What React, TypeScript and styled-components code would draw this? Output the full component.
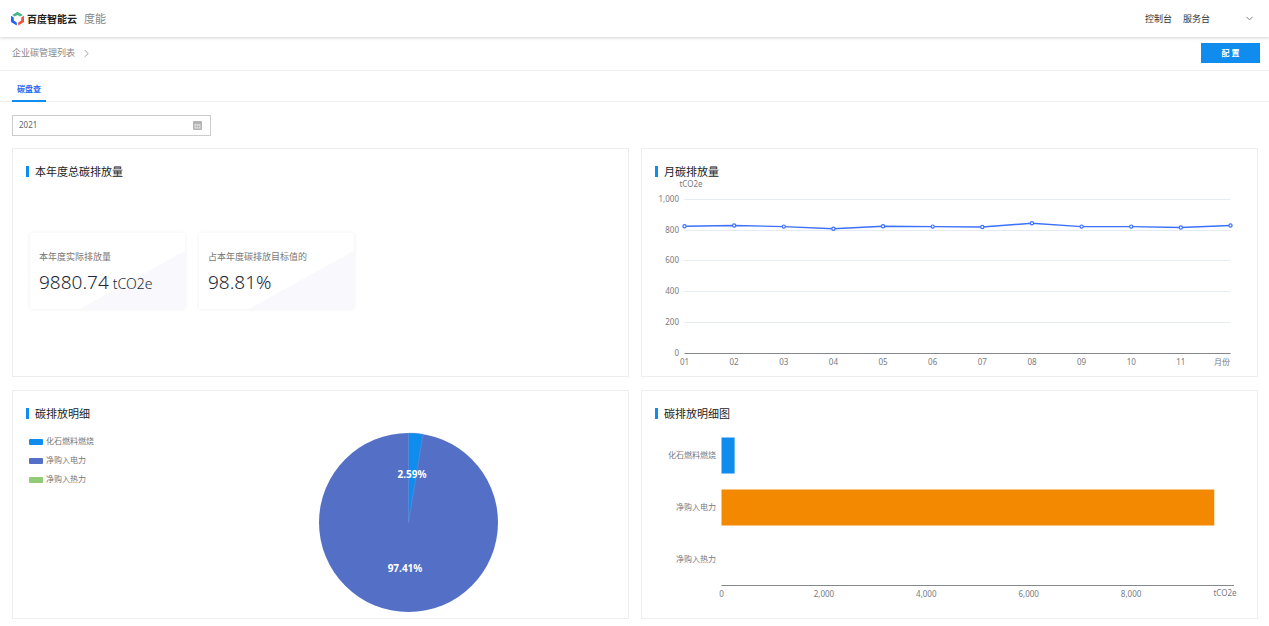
import React from "react";
import styled, { createGlobalStyle } from "styled-components";
import { ChevronDown, ChevronRight } from "lucide-react";

const GlobalStyle = createGlobalStyle`
  * { box-sizing: border-box; }
  body {
    margin: 0;
    background: #fff;
    color: #333;
    font: 8px/12px "Noto Sans", "Noto Sans CJK SC", sans-serif;
  }
  svg text { font: 8px "Noto Sans", "Noto Sans CJK SC", sans-serif; }
`;

const TopBar = styled.header`
  display: flex;
  align-items: center;
  height: 37px;
  padding: 0 14px 0 10px;
  box-shadow: 0 1px 3px rgba(0, 0, 0, 0.18);
`;

const Brand = styled.a`
  display: flex;
  align-items: center;
  gap: 2px;
  color: #222;
  font-size: 10px;
  font-weight: 700;
  text-decoration: none;
`;

const Product = styled.span`
  margin-left: 7px;
  color: #888;
  font-size: 11px;
`;

const TopNav = styled.nav`
  display: flex;
  gap: 11px;
  margin-left: auto;
`;

const TopLink = styled.a`
  color: #333;
  font-size: 9px;
  text-decoration: none;
`;

const AccountButton = styled.button`
  display: flex;
  margin-left: 34px;
  padding: 0;
  border: 0;
  background: none;
  color: #777;
`;

const CrumbBar = styled.div`
  display: flex;
  align-items: center;
  justify-content: space-between;
  height: 34px;
  padding: 0 9px 1px 12px;
  border-bottom: 1px solid #eee;
`;

const Crumb = styled.a`
  display: flex;
  align-items: center;
  gap: 5px;
  color: #888;
  font-size: 9px;
  text-decoration: none;
`;

const PrimaryButton = styled.button`
  width: 59px;
  height: 20px;
  padding: 0;
  border: 0;
  background: #108cee;
  color: #fff;
  font: inherit;
  font-weight: 600;
`;

const TabBar = styled.div`
  display: flex;
  height: 31px;
  padding: 0 12px;
  border-bottom: 1px solid #eee;
`;

const Tab = styled.button`
  height: 31px;
  padding: 6px 5px 0;
  border: 0;
  border-bottom: 2px solid #108cee;
  background: none;
  color: #2468f2;
  font: inherit;
  font-weight: 700;
`;

const Content = styled.main`
  padding: 13px 11px 7px 12px;
`;

const YearPicker = styled.label`
  display: flex;
  align-items: center;
  width: 199px;
  height: 21px;
  margin-bottom: 12px;
  padding: 0 8px 0 6px;
  border: 1px solid #ccc;
`;

const YearInput = styled.input`
  flex: 1;
  min-width: 0;
  padding: 0 0 1px;
  border: 0;
  outline: 0;
  background: none;
  color: #666;
  font: inherit;
`;

const PanelGrid = styled.div`
  display: grid;
  grid-template-columns: repeat(2, minmax(0, 1fr));
  gap: 13px 12px;
`;

const PanelBox = styled.section`
  display: flex;
  flex-direction: column;
  min-height: 229px;
  padding-top: 17px;
  border: 1px solid #eee;
`;

const PanelTitle = styled.h2`
  margin: 0 0 0 13px;
  padding-left: 6px;
  border-left: 3px solid #108cee;
  color: #222;
  font-size: 11px;
  font-weight: 400;
  line-height: 11px;
`;

const StatRow = styled.div`
  display: flex;
  flex: 1;
  align-items: center;
  gap: 14px;
  padding: 0 17px 12px;
`;

const StatCard = styled.div`
  width: 155px;
  height: 76px;
  padding: 18px 9px 0;
  border-radius: 2px;
  background: linear-gradient(151deg, #fff 64%, #f8f8fd 64%);
  box-shadow: 0 0 4px rgba(0, 0, 0, 0.07);
`;

const StatLabel = styled.div`
  color: #777;
  font-size: 9px;
`;

const StatValue = styled.div`
  margin-top: 6px;
  color: #222736;
  font-size: 19px;
  font-weight: 300;
  line-height: 26px;
`;

const StatUnit = styled.span`
  margin-left: 4px;
  font-size: 14px;
`;

const ChartSvg = styled.svg`
  display: block;
  width: 100%;
  height: auto;
`;

const PieBody = styled.div`
  display: flex;
`;

const Legend = styled.ul`
  display: flex;
  flex: none;
  flex-direction: column;
  gap: 7px;
  width: 176px;
  margin: 0;
  padding: 16px 0 0 16px;
  list-style: none;
`;

const LegendItem = styled.li`
  display: flex;
  align-items: center;
  gap: 3px;
  color: #777;
`;

const Swatch = styled.span<{ $color: string }>`
  width: 14px;
  height: 6px;
  margin-top: 2px;
  border-radius: 1px;
  background: ${(p) => p.$color};
`;

const PieArea = styled.div`
  display: flex;
  flex: 1;
  justify-content: center;
  padding-top: 13px;
`;

const AXIS = "#85878e";
const LABEL = "#777a82";

function LogoMark() {
  return (
    <svg width="15" height="15" viewBox="0 0 30 30" fill="none" aria-hidden="true">
      <path d="M4.500 7.800 15 1.500l10.500 6.300-5.200 3.200L15 8l-5.300 3Z" fill="#45b787" />
      <path d="M2 9.500 7.600 12.800v6.400l6 3.600v6L2 22Z" fill="#2563f5" />
      <path d="M28 9.500 22.400 12.800v6.400l-6 3.600v6L28 22Z" fill="#f0523c" />
    </svg>
  );
}

function CalendarIcon() {
  return (
    <svg width="9" height="9" viewBox="0 0 9 9" aria-hidden="true">
      <rect width="9" height="9" rx="1" fill="#b4b4b4" />
      <path d="M1.500 3h6v4.500h-6Z" fill="#ddd" />
      <path d="M2 5.300h5M3.500 3.500v3.500M5.500 3.500v3.500" stroke="#b4b4b4" strokeWidth=".6" />
    </svg>
  );
}

const monthly = [825, 830, 823, 809, 825, 823, 820, 845, 823, 823, 817, 830];

function LineChart() {
  const left = 42.5;
  const right = 588.5;
  const base = 176.5;
  const px = (i: number) => left + ((right - left) * i) / 11;
  const py = (v: number) => base - v * 0.1542;
  return (
    <ChartSvg viewBox="0 0 615 199" role="img" aria-label="月碳排放量">
      <text x="49" y="10" textAnchor="middle" fill={LABEL}>tCO2e</text>
      {[0, 200, 400, 600, 800, 1000].map((v) => {
        const y = Math.round(py(v) - 0.5) + 0.5;
        return (
          <g key={v}>
            <line x1={left} x2={right} y1={y} y2={y} stroke={v ? "#e6ebf3" : AXIS} />
            <text x="37" y={y + 2} textAnchor="end" fill={LABEL}>{v.toLocaleString("en-US")}</text>
          </g>
        );
      })}
      <polyline
        points={monthly.map((v, i) => `${px(i)},${py(v)}`).join(" ")}
        fill="none"
        stroke="#3b71fe"
        strokeWidth="1.400"
      />
      {monthly.map((v, i) => (
        <g key={i}>
          <circle cx={px(i)} cy={py(v)} r="1.600" fill="#fff" stroke="#3b71fe" strokeWidth="1.200" />
          <text x={i === 11 ? 588 : px(i)} y="188" textAnchor={i === 11 ? "end" : "middle"} fill={LABEL}>
            {i === 11 ? "月份" : String(i + 1).padStart(2, "0")}
          </text>
        </g>
      ))}
    </ChartSvg>
  );
}

const PieLabel = styled.text`
  && {
    fill: #fff;
    font-size: 10px;
    font-weight: 700;
    text-anchor: middle;
  }
`;

function PieChart() {
  const r = 89.5;
  const c = 90.5;
  const angle = 0.0259 * 2 * Math.PI;
  const ex = c + r * Math.sin(angle);
  const ey = c - r * Math.cos(angle);
  return (
    <svg width="181" height="181" viewBox="0 0 181 181" role="img" aria-label="碳排放明细">
      <circle cx={c} cy={c} r={r} fill="#5470c6" />
      <path
        d={`M${c} ${c}V${c - r}A${r} ${r} 0 0 1 ${ex} ${ey}Z`}
        fill="#108cee"
        stroke="#7d9bd8"
        strokeWidth=".4"
      />
      <PieLabel x="94" y="46">2.59%</PieLabel>
      <PieLabel x="87" y="140">97.41%</PieLabel>
    </svg>
  );
}

const sources = [
  { name: "化石燃料燃烧", value: 256, bar: "#108cee", slice: "#108cee" },
  { name: "净购入电力", value: 9624.74, bar: "#f38900", slice: "#5470c6" },
  { name: "净购入热力", value: 0, bar: "#91cc75", slice: "#91cc75" },
];

function BarChart() {
  const left = 79.5;
  return (
    <ChartSvg viewBox="0 0 615 199" role="img" aria-label="碳排放明细图">
      {sources.map((s, i) => (
        <g key={s.name}>
          <rect x={left} y={18.5 + i * 52} width={s.value * 0.0512} height="36" fill={s.bar} />
          <text x="74" y={39 + i * 52} textAnchor="end" fill={LABEL}>{s.name}</text>
        </g>
      ))}
      <line x1={left} x2="592" y1="166.500" y2="166.500" stroke={AXIS} />
      {[0, 2000, 4000, 6000, 8000].map((v) => (
        <text key={v} x={left + v * 0.0512} y="178" textAnchor="middle" fill={LABEL}>
          {v.toLocaleString("en-US")}
        </text>
      ))}
      <text x="583" y="177" textAnchor="middle" fill={LABEL}>tCO2e</text>
    </ChartSvg>
  );
}

function Panel({ title, children }: { title: string; children: React.ReactNode }) {
  return (
    <PanelBox>
      <PanelTitle>{title}</PanelTitle>
      {children}
    </PanelBox>
  );
}

export default function App() {
  return (
    <>
      <GlobalStyle />
      <TopBar>
        <Brand href="#">
          <LogoMark />
          百度智能云
        </Brand>
        <Product>度能</Product>
        <TopNav>
          <TopLink href="#">控制台</TopLink>
          <TopLink href="#">服务台</TopLink>
        </TopNav>
        <AccountButton type="button" aria-label="账户">
          <ChevronDown size={11} strokeWidth={2} />
        </AccountButton>
      </TopBar>
      <CrumbBar>
        <Crumb href="#">
          企业碳管理列表
          <ChevronRight size={13} strokeWidth={1.5} />
        </Crumb>
        <PrimaryButton type="button">配 置</PrimaryButton>
      </CrumbBar>
      <TabBar role="tablist">
        <Tab type="button" role="tab" aria-selected="true">碳盘查</Tab>
      </TabBar>
      <Content>
        <YearPicker>
          <YearInput type="text" aria-label="年份" defaultValue="2021" />
          <CalendarIcon />
        </YearPicker>
        <PanelGrid>
          <Panel title="本年度总碳排放量">
            <StatRow>
              <StatCard>
                <StatLabel>本年度实际排放量</StatLabel>
                <StatValue>
                  9880.74
                  <StatUnit>tCO2e</StatUnit>
                </StatValue>
              </StatCard>
              <StatCard>
                <StatLabel>占本年度碳排放目标值的</StatLabel>
                <StatValue>98.81%</StatValue>
              </StatCard>
            </StatRow>
          </Panel>
          <Panel title="月碳排放量">
            <LineChart />
          </Panel>
          <Panel title="碳排放明细">
            <PieBody>
              <Legend>
                {sources.map((s) => (
                  <LegendItem key={s.name}>
                    <Swatch $color={s.slice} />
                    {s.name}
                  </LegendItem>
                ))}
              </Legend>
              <PieArea>
                <PieChart />
              </PieArea>
            </PieBody>
          </Panel>
          <Panel title="碳排放明细图">
            <BarChart />
          </Panel>
        </PanelGrid>
      </Content>
    </>
  );
}
